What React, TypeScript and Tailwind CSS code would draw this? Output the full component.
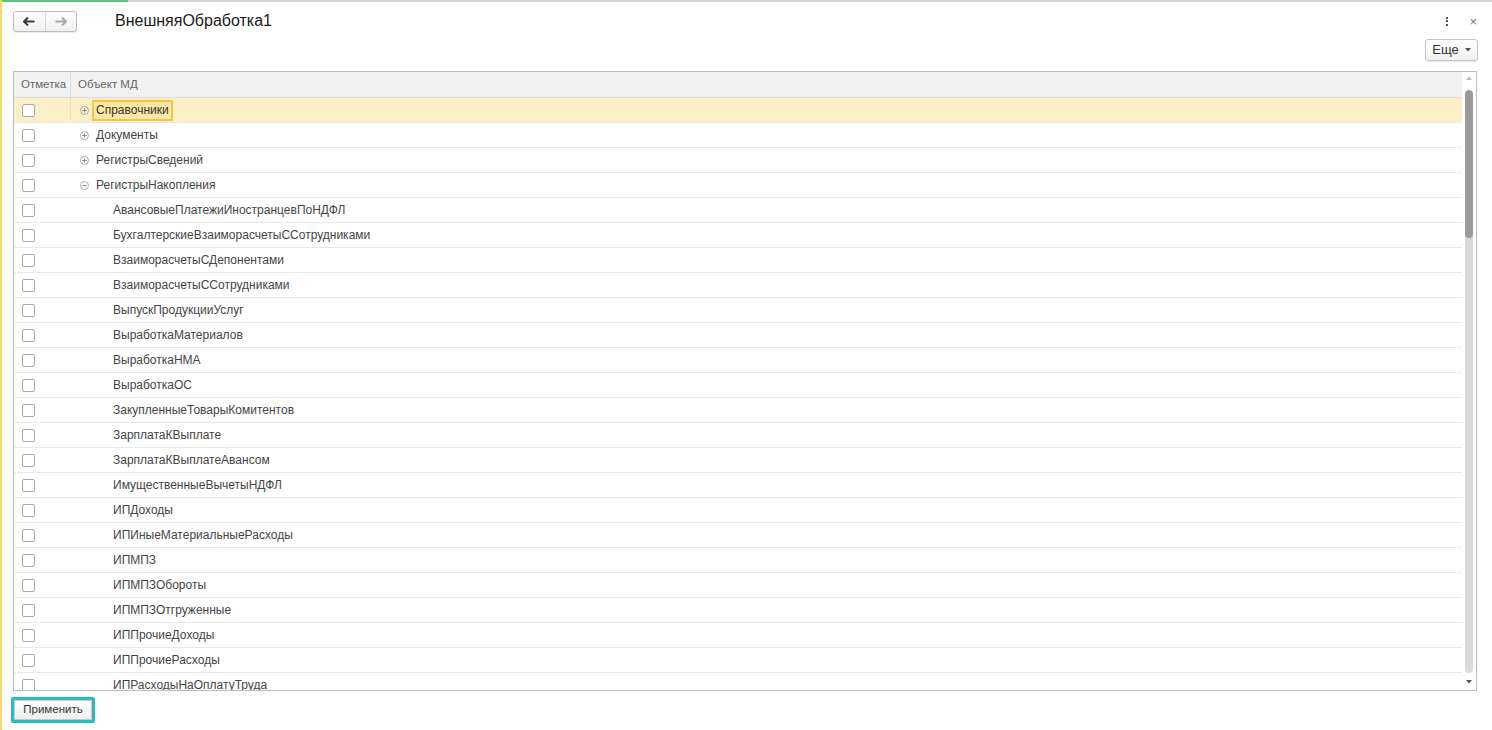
import React from 'react';

const groups = [
  { name: 'Справочники', open: false },
  { name: 'Документы', open: false },
  { name: 'РегистрыСведений', open: false },
  { name: 'РегистрыНакопления', open: true },
];

const children = [
  'АвансовыеПлатежиИностранцевПоНДФЛ',
  'БухгалтерскиеВзаиморасчетыССотрудниками',
  'ВзаиморасчетыСДепонентами',
  'ВзаиморасчетыССотрудниками',
  'ВыпускПродукцииУслуг',
  'ВыработкаМатериалов',
  'ВыработкаНМА',
  'ВыработкаОС',
  'ЗакупленныеТоварыКомитентов',
  'ЗарплатаКВыплате',
  'ЗарплатаКВыплатеАвансом',
  'ИмущественныеВычетыНДФЛ',
  'ИПДоходы',
  'ИПИныеМатериальныеРасходы',
  'ИПМПЗ',
  'ИПМПЗОбороты',
  'ИПМПЗОтгруженные',
  'ИППрочиеДоходы',
  'ИППрочиеРасходы',
  'ИПРасходыНаОплатуТруда',
];

const Checkbox = () => (
  <span className="block w-[13px] h-[13px] rounded-[2px] border border-[#a9a9a9] bg-white" />
);

const TreeToggle = ({ open }: { open: boolean }) => (
  <svg width="9" height="9" viewBox="0 0 9 9" className="shrink-0">
    <circle cx="4.5" cy="4.5" r="4" fill="none" stroke="#a8a8a8" strokeWidth="1" />
    <line x1="2.3" y1="4.5" x2="6.7" y2="4.5" stroke="#8a8a8a" strokeWidth="1" />
    {!open && <line x1="4.5" y1="2.3" x2="4.5" y2="6.7" stroke="#8a8a8a" strokeWidth="1" />}
  </svg>
);

export default function App() {
  return (
    <div
      className="w-[1492px] h-[730px] bg-white relative overflow-hidden text-[12px] text-[#444]"
      style={{ fontFamily: '"Liberation Sans", Arial, sans-serif' }}
    >
      {/* window chrome edges */}
      <div className="flex h-[2px]">
        <div className="w-[128px] bg-[#5cc47a]" />
        <div className="flex-1 bg-[#d6d6d6]" />
      </div>
      <div className="absolute left-0 top-0 bottom-0 w-[2px] bg-[#efd77a]" />

      <div className="pl-[13px] pr-[15px]">
        {/* header */}
        <div className="flex items-center h-[37px] pt-[1px]">
          <div className="flex h-[21px] w-[64px] rounded-[3px] border border-[#bdbdbd] bg-gradient-to-b from-white to-[#f0f0f0] shadow-[0_1px_1px_rgba(0,0,0,0.08)]">
            <div className="flex-1 flex items-center justify-center border-r border-[#d5d5d5]">
              <svg width="12" height="9" viewBox="0 0 12 9">
                <path d="M5 0.5 L1 4.5 L5 8.5 M1 4.5 H11.5" fill="none" stroke="#3c3c3c" strokeWidth="2" />
              </svg>
            </div>
            <div className="flex-1 flex items-center justify-center">
              <svg width="12" height="9" viewBox="0 0 12 9">
                <path d="M7 0.5 L11 4.5 L7 8.5 M11 4.5 H0.5" fill="none" stroke="#a8a8a8" strokeWidth="2" />
              </svg>
            </div>
          </div>
          <div className="ml-[38px] text-[16px] text-[#1a1a1a] leading-none">ВнешняяОбработка1</div>
          <div className="flex-1" />
          <div className="flex flex-col gap-[1.5px] mr-[21px]">
            <span className="block w-[2px] h-[2px] bg-[#555]" />
            <span className="block w-[2px] h-[2px] bg-[#555]" />
            <span className="block w-[2px] h-[2px] bg-[#555]" />
          </div>
          <span className="text-[13px] text-[#777] leading-none">×</span>
        </div>

        {/* toolbar */}
        <div className="flex justify-end h-[32px] items-start">
          <div className="mr-[-1px] h-[22px] w-[53px] flex items-center justify-center gap-[6px] rounded-[3px] border border-[#c4c4c4] bg-gradient-to-b from-white to-[#f1f1f1] shadow-[0_1px_1px_rgba(0,0,0,0.1)] text-[13px] text-[#333]">
            <span>Еще</span>
            <svg width="6" height="4" viewBox="0 0 6 4"><path d="M0 0 H6 L3 3.5 Z" fill="#555" /></svg>
          </div>
        </div>

        {/* table */}
        <div className="h-[620px] border border-[#bcbcbc] flex overflow-hidden">
          <div className="flex-1 flex flex-col overflow-hidden">
            <div className="flex h-[26px] shrink-0 bg-[#f2f2f2] border-b border-[#dcdcdc] text-[#666] text-[11.5px]">
              <div className="w-[57px] border-r border-[#dcdcdc] flex items-center pl-[7px]">Отметка</div>
              <div className="flex-1 flex items-center pl-[7px]">Объект МД</div>
            </div>
            {groups.map((g, i) => (
              <div
                key={g.name}
                className={`flex h-[25px] shrink-0 border-b border-[#e8e8e8] ${i === 0 ? 'bg-[#fcf0c8]' : ''}`}
              >
                <div className={`w-[57px] flex items-center pl-[8px] ${i === 0 ? 'border-r border-[#efe3bd]' : ''}`}>
                  <Checkbox />
                </div>
                <div className="flex-1 flex items-center pl-[9px]">
                  <TreeToggle open={g.open} />
                  {i === 0 ? (
                    <span className="ml-[3px] h-[21px] flex items-center px-[2px] border-2 border-[#f4c542] bg-[#fde7a4] text-[#333] whitespace-nowrap">
                      {g.name}
                    </span>
                  ) : (
                    <span className="ml-[7px] whitespace-nowrap">{g.name}</span>
                  )}
                </div>
              </div>
            ))}
            {children.map((c) => (
              <div key={c} className="flex h-[25px] shrink-0 border-b border-[#e8e8e8]">
                <div className="w-[57px] flex items-center pl-[8px]">
                  <Checkbox />
                </div>
                <div className="flex-1 flex items-center pl-[42px] whitespace-nowrap">{c}</div>
              </div>
            ))}
          </div>
          {/* scrollbar */}
          <div className="w-[14px] shrink-0 flex flex-col items-center pt-[4px] pb-[6px]">
            <svg width="6" height="4" viewBox="0 0 6 4" className="shrink-0"><path d="M0 4 H6 L3 0.5 Z" fill="#bbb" /></svg>
            <div className="mt-[10px] flex-1 w-[8px] rounded-full bg-[#dadada] flex flex-col overflow-hidden">
              <div className="h-[148px] bg-[#9a9a9a] rounded-full" />
            </div>
            <svg width="6" height="4" viewBox="0 0 6 4" className="mt-[7px] shrink-0"><path d="M0 0 H6 L3 3.5 Z" fill="#555" /></svg>
          </div>
        </div>

        {/* footer */}
        <div className="mt-[6px] ml-[-2px] w-[84px] h-[26px] border-[3px] border-[#2dbdb9] rounded-[2px] flex items-stretch">
          <div className="flex-1 flex items-center justify-center bg-gradient-to-b from-white to-[#eeeeee] border border-[#c8c8c8] text-[#333] text-[11.5px] whitespace-nowrap leading-none">
            Применить
          </div>
        </div>
      </div>
    </div>
  );
}
